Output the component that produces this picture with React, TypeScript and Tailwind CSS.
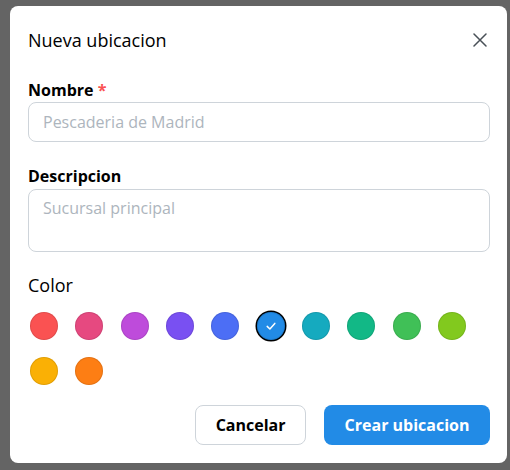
import React, { useState } from "react";

const swatches = [
  "#fa5252",
  "#e64980",
  "#be4bdb",
  "#7950f2",
  "#4c6ef5",
  "#228be6",
  "#15aabf",
  "#12b886",
  "#40c057",
  "#82c91e",
  "#fab005",
  "#fd7e14",
];

export default function App() {
  const [color, setColor] = useState("#228be6");

  return (
    <div className="min-h-screen bg-[#646464] pt-[6px] pl-[10px] font-['Open_Sans',sans-serif] text-black">
      <div className="w-[497px] h-[457px] bg-white rounded-lg pl-[18px] pr-[17px] pt-[20px]">
        {/* Header */}
        <div className="flex items-center justify-between h-[28px]">
          <h2 className="text-[18px] leading-[28px] font-normal">Nueva ubicacion</h2>
          <button className="w-[28px] h-[28px] flex items-center justify-center mr-[-4px]">
            <svg width="14" height="14" viewBox="0 0 14 14" fill="none">
              <path d="M1 1L13 13M13 1L1 13" stroke="#495057" strokeWidth="1.5" strokeLinecap="round" />
            </svg>
          </button>
        </div>

        {/* Nombre */}
        <div className="mt-[24px]">
          <label className="block text-[16px] leading-[24px] font-bold">
            Nombre <span className="text-[#fa5252]">*</span>
          </label>
          <input
            type="text"
            placeholder="Pescaderia de Madrid"
            className="w-full h-[40px] border border-[#ced4da] rounded-lg px-[14px] text-[16px] placeholder:text-[#adb5bd] focus:outline-none"
          />
        </div>

        {/* Descripcion */}
        <div className="mt-[22px]">
          <label className="block text-[16px] leading-[24px] font-bold">Descripcion</label>
          <textarea
            placeholder="Sucursal principal"
            className="block w-full h-[63px] mt-[1px] border border-[#ced4da] rounded-lg px-[14px] pt-[6px] text-[16px] leading-[24px] resize-none placeholder:text-[#adb5bd] focus:outline-none"
          />
        </div>

        {/* Color */}
        <div className="mt-[19px] text-[18px] leading-[28px]">Color</div>
        <div className="mt-[13px] pl-[2px] flex flex-wrap gap-x-[17.33px] gap-y-[17px]">
          {swatches.map((c) => (
            <button
              key={c}
              onClick={() => setColor(c)}
              className={`w-[28px] h-[28px] rounded-full flex items-center justify-center ${
                color === c
                  ? "shadow-[0_0_0_1.5px_#000,inset_0_0_0_1px_rgba(0,0,0,0.1)]"
                  : "shadow-[inset_0_0_0_1px_rgba(0,0,0,0.1)]"
              }`}
              style={{ backgroundColor: c }}
            >
              {color === c && (
                <svg width="12" height="12" viewBox="0 0 12 12" fill="none">
                  <path d="M2.2 6.4L4.9 9L9.8 3.4" stroke="#fff" strokeWidth="1.5" strokeLinecap="round" strokeLinejoin="round" />
                </svg>
              )}
            </button>
          ))}
        </div>

        {/* Actions */}
        <div className="mt-[20px] flex justify-end gap-[18px]">
          <button className="h-[40px] px-[19.5px] border border-[#ced4da] rounded-lg bg-white text-[16px] font-bold">
            Cancelar
          </button>
          <button className="h-[40px] px-[20.5px] rounded-lg bg-[#228be6] text-white text-[16px] font-bold">
            Crear ubicacion
          </button>
        </div>
      </div>
    </div>
  );
}
